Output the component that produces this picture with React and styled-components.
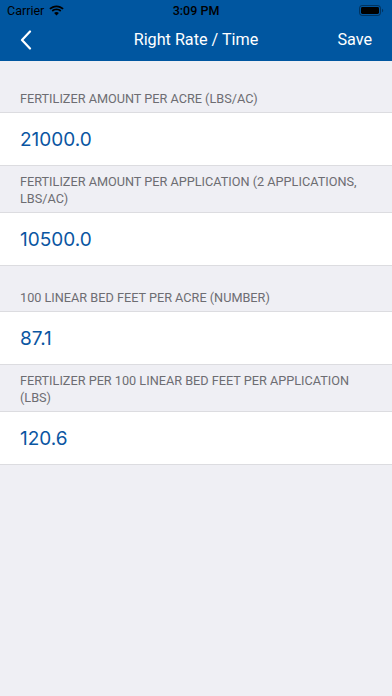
import React from "react";
import styled, { createGlobalStyle } from "styled-components";

const GlobalStyle = createGlobalStyle`
  html, body {
    margin: 0;
    padding: 0;
    background: #efeff4;
    font-family: Roboto, "Liberation Sans", Arial, sans-serif;
    -webkit-font-smoothing: antialiased;
  }
`;

const Page = styled.div`
  width: 392px;
  min-height: 696px;
  background: #efeff4;
`;

const TopBar = styled.div`
  background: #0056a0;
  height: 61px;
  display: flex;
  flex-direction: column;
`;

const StatusBar = styled.div`
  height: 20px;
  display: grid;
  grid-template-columns: 1fr auto 1fr;
  align-items: center;
  padding: 0 7px;
  font-size: 12.5px;
  color: #000;
`;

const StatusLeft = styled.div`
  display: flex;
  align-items: center;
  gap: 5px;
`;

const Time = styled.div`
  font-weight: 500;
  font-size: 12.5px;
`;

const StatusRight = styled.div`
  display: flex;
  justify-content: flex-end;
  padding-right: 1px;
`;

const NavBar = styled.div`
  flex: 1;
  display: grid;
  grid-template-columns: 80px 1fr 80px;
  align-items: center;
  color: #fff;
  font-size: 16.2px;
  padding-bottom: 2px;
`;

const BackButton = styled.button`
  background: none;
  border: none;
  padding: 0 0 0 20px;
  display: flex;
  align-items: center;
  justify-self: start;
`;

const Title = styled.div`
  text-align: center;
`;

const SaveButton = styled.button`
  background: none;
  border: none;
  color: #fff;
  font: inherit;
  justify-self: end;
  padding: 0 20px 0 0;
`;

const SectionHeader = styled.div`
  box-sizing: border-box;
  min-height: ${({ first }) => (first ? "52px" : "46px")};
  display: flex;
  align-items: flex-end;
  padding: 7px 20px 5px;
  color: #6d6d72;
  font-size: 12.7px;
  line-height: 17px;
  text-transform: uppercase;
  border-bottom: 1px solid #dcdce0;
`;

const ValueRow = styled.div`
  box-sizing: border-box;
  height: 53px;
  background: #fff;
  display: flex;
  align-items: center;
  padding: 0 20px;
  color: #0a56a2;
  font-family: Inter, "Liberation Sans", Arial, sans-serif;
  font-size: 19px;
  border-bottom: 1px solid #dcdce0;
`;

const fields = [
  { label: "Fertilizer amount per acre (lbs/ac)", value: "21000.0" },
  {
    label: "Fertilizer amount per application (2 applications, lbs/ac)",
    value: "10500.0",
  },
  { label: "100 linear bed feet per acre (number)", value: "87.1" },
  {
    label: "Fertilizer per 100 linear bed feet per application (lbs)",
    value: "120.6",
  },
];

const Wifi = () => (
  <svg width="15" height="11" viewBox="0 0 15 11">
    <path d="M7.5 2.2c2.3 0 4.4.9 6 2.4l1.2-1.3C12.8 1.5 10.3.4 7.5.4S2.2 1.5.3 3.3l1.2 1.3c1.6-1.5 3.7-2.4 6-2.4z" fill="#000" />
    <path d="M7.5 5.3c1.4 0 2.6.5 3.6 1.4l1.2-1.3C11 4.2 9.3 3.5 7.5 3.5S4 4.2 2.7 5.4l1.2 1.3c1-.9 2.2-1.4 3.6-1.4z" fill="#000" />
    <path d="M7.5 10.6l2.4-2.6c-.6-.6-1.5-.9-2.4-.9s-1.8.3-2.4.9z" fill="#000" />
  </svg>
);

const Battery = () => (
  <svg width="25" height="11" viewBox="0 0 25 11">
    <rect x="0.5" y="0.5" width="21" height="10" rx="2.6" fill="none" stroke="#000" strokeOpacity="0.4" />
    <rect x="2" y="2" width="18" height="7" rx="1.4" fill="#000" />
    <path d="M23 3.7v3.6c.7-.3 1.2-1 1.2-1.8s-.5-1.5-1.2-1.8z" fill="#000" fillOpacity="0.4" />
  </svg>
);

const Chevron = () => (
  <svg width="12" height="20" viewBox="0 0 12 20">
    <path d="M10 1.5L2 10l8 8.5" fill="none" stroke="#fff" strokeWidth="2.2" strokeLinecap="round" strokeLinejoin="round" />
  </svg>
);

const App = () => (
  <Page>
    <GlobalStyle />
    <TopBar>
      <StatusBar>
        <StatusLeft>
          <span>Carrier</span>
          <Wifi />
        </StatusLeft>
        <Time>3:09 PM</Time>
        <StatusRight>
          <Battery />
        </StatusRight>
      </StatusBar>
      <NavBar>
        <BackButton aria-label="Back">
          <Chevron />
        </BackButton>
        <Title>Right Rate / Time</Title>
        <SaveButton>Save</SaveButton>
      </NavBar>
    </TopBar>
    {fields.map(({ label, value }, i) => (
      <React.Fragment key={label}>
        <SectionHeader first={i === 0}>{label}</SectionHeader>
        <ValueRow>{value}</ValueRow>
      </React.Fragment>
    ))}
  </Page>
);

export default App;
